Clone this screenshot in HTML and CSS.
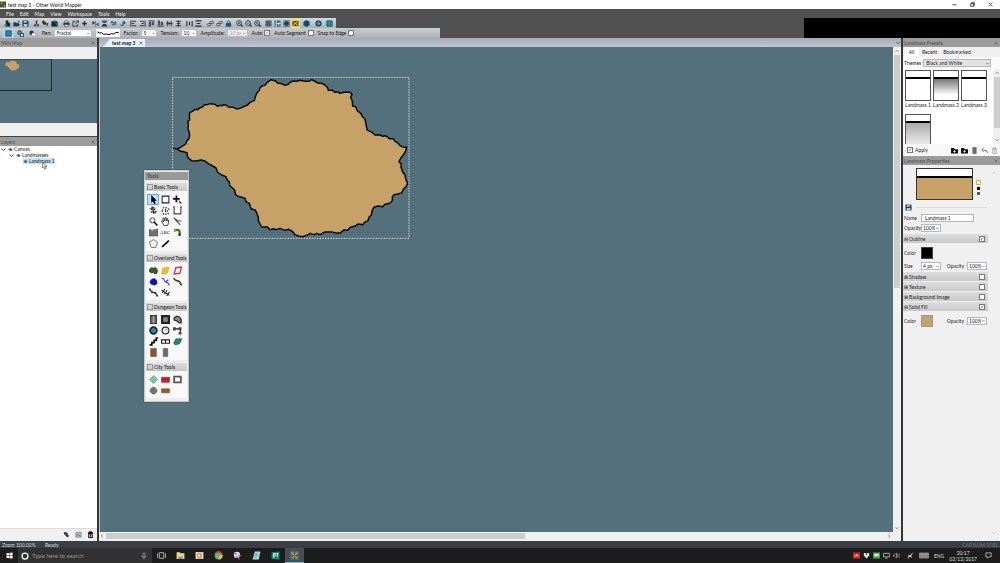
FILE: index.html
```html
<!DOCTYPE html>
<html lang="en">
<head>
<meta charset="utf-8">
<meta name="viewport" content="width=device-width, initial-scale=1">
<title>test map 3 - Other World Mapper</title>
<link rel="stylesheet" href="styles.css">
</head>
<body>
<svg class="sprite" aria-hidden="true">
  <symbol id="new" viewBox="0 0 16 16"><path d="M4 1h6v5h4v9H4z" fill="#17242e"/><path d="M1 12h8M5 8v8" stroke="#1d5f7e" stroke-width="2"/></symbol>
  <symbol id="open" viewBox="0 0 16 16"><path d="M1 14V5h5l1 2h6v2h3l-3 5z" fill="#17394c"/><path d="M9 3h4V1l3 3-3 3" fill="#1d6f97"/></symbol>
  <symbol id="save" viewBox="0 0 16 16"><path d="M1 1h12l2 2v12H1z" fill="#1c455c"/><path d="M4 2h7v4H4zM4 9h8v6H4z" fill="#b9cbd6"/></symbol>
  <symbol id="cut" viewBox="0 0 16 16"><path d="M6 1l3 8M10 1L7 9" stroke="#222" stroke-width="2"/><circle cx="5" cy="12" r="2" fill="none" stroke="#222" stroke-width="2"/><circle cx="11" cy="12" r="2" fill="none" stroke="#222" stroke-width="2"/></symbol>
  <symbol id="link" viewBox="0 0 16 16"><path d="M3 2l5 5-3 3-4-5zM8 7l5 6M9 11l5-4" fill="#333" stroke="#333" stroke-width="2.5"/></symbol>
  <symbol id="paste" viewBox="0 0 16 16"><path d="M1 3h14v12H1z" fill="#142631"/><path d="M5 1h6v4H5z" fill="#356a86"/><path d="M8 7h7v8" fill="#245f7f"/></symbol>
  <symbol id="print" viewBox="0 0 16 16"><path d="M1 6h14v6H1z" fill="#30363a"/><path d="M4 2h8v4H4zM4 10h8v5H4z" fill="#cdd5da" stroke="#30363a"/></symbol>
  <symbol id="export" viewBox="0 0 16 16"><path d="M8 3H2v11h11v-4M7 9l7-6M10 2h5v5" fill="none" stroke="#28333a" stroke-width="2"/></symbol>
  <symbol id="plus" viewBox="0 0 16 16"><path d="M8 3v10M3 8h10" stroke="#1c2a33" stroke-width="3"/></symbol>
  <symbol id="fliph" viewBox="0 0 16 16"><path d="M1 2l6 4-6 5z" fill="#222"/><path d="M15 5v9l-6-4z" fill="#14638b"/><path d="M8 1v14" stroke="#222"/></symbol>
  <symbol id="flipv" viewBox="0 0 16 16"><path d="M1 1h14l-4 6H5z" fill="#176289"/><path d="M5 9h6l4 6H1z" fill="#273740"/></symbol>
  <symbol id="undo" viewBox="0 0 16 16"><path d="M2 6h8v5H4M2 6l4-4M13 3v8" fill="none" stroke="#35627c" stroke-width="2.5"/></symbol>
  <symbol id="redo" viewBox="0 0 16 16"><path d="M2 12h7V6h4M10 2l4 4-4 4" fill="none" stroke="#246588" stroke-width="2.5"/></symbol>
  <symbol id="al" viewBox="0 0 16 16"><path d="M2 1v14M4 3h10M4 8h6M4 13h10" stroke="#252b2f" stroke-width="2" fill="none"/></symbol>
  <symbol id="ar" viewBox="0 0 16 16"><path d="M14 1v14M2 3h10M6 8h6M2 13h10" stroke="#252b2f" stroke-width="2" fill="none"/></symbol>
  <symbol id="at" viewBox="0 0 16 16"><path d="M1 2h14M3 4v10h3V4M10 4v7h3V4" stroke="#252b2f" stroke-width="2" fill="none"/></symbol>
  <symbol id="ab" viewBox="0 0 16 16"><path d="M1 14h14M3 12V2h3v10M10 12V5h3v7" stroke="#252b2f" stroke-width="2" fill="none"/></symbol>
  <symbol id="am" viewBox="0 0 16 16"><path d="M1 8h14M3 2v12M7 4v8M12 2v12" stroke="#252b2f" stroke-width="2" fill="none"/></symbol>
  <symbol id="ac" viewBox="0 0 16 16"><path d="M8 1v14M2 3h12M4 8h8M2 13h12" stroke="#252b2f" stroke-width="2" fill="none"/></symbol>
  <symbol id="dh" viewBox="0 0 16 16"><path d="M2 2v12M14 2v12M8 4v8" stroke="#252b2f" stroke-width="2.5" fill="none"/></symbol>
  <symbol id="dv" viewBox="0 0 16 16"><path d="M1 2h14M4 8h8M1 14h14" stroke="#252b2f" stroke-width="2.5" fill="none"/></symbol>
  <symbol id="chain" viewBox="0 0 16 16"><rect x="1" y="8" width="8" height="5" rx="2" fill="none" stroke="#444f56" stroke-width="2"/><rect x="7" y="3" width="8" height="5" rx="2" fill="none" stroke="#444f56" stroke-width="2"/></symbol>
  <symbol id="lock" viewBox="0 0 16 16"><path d="M2 7h12v8H2z" fill="#175273"/><path d="M5 7V4q3-5 6 0v3" fill="none" stroke="#175273" stroke-width="2"/></symbol>
  <symbol id="zoomi" viewBox="0 0 16 16"><circle cx="7" cy="7" r="5.5" fill="#c6d5dd" stroke="#1e2f3a" stroke-width="2"/><path d="M11 11l4 4" stroke="#1e2f3a" stroke-width="3"/><path d="M4 7h6M7 4v6" stroke="#175273" stroke-width="2"/></symbol>
  <symbol id="zoomo" viewBox="0 0 16 16"><circle cx="7" cy="7" r="5.5" fill="#c6d5dd" stroke="#1e2f3a" stroke-width="2"/><path d="M11 11l4 4" stroke="#1e2f3a" stroke-width="3"/><path d="M4 7h6" stroke="#175273" stroke-width="2"/></symbol>
  <symbol id="grid" viewBox="0 0 16 16"><path d="M1 1h14v14H1z" fill="#60727d"/><path d="M1 5h14M1 10h14M5 1v14M10 1v14" stroke="#35444d"/></symbol>
  <symbol id="snap" viewBox="0 0 16 16"><path d="M1 1h14v14H1z" fill="#3d6a82"/><path d="M5 1v14M11 5v7M5 8h10" stroke="#dbe6ec" stroke-width="2"/></symbol>
  <symbol id="fit" viewBox="0 0 16 16"><path d="M1 1h14v14H1z" fill="#345a6e"/><path d="M3 3l10 10M13 3L3 13" stroke="#c5d3da" stroke-width="2"/><path d="M5 5h6v6H5z" fill="#15222a"/></symbol>
  <symbol id="fitall" viewBox="0 0 16 16"><path d="M1 2h14v12H1z" fill="#4c4415"/><path d="M3 4l10 8M13 4L3 12" stroke="#fff3a6" stroke-width="2"/></symbol>
  <symbol id="hex" viewBox="0 0 16 16"><path d="M8 0l7 4v8l-7 4-7-4V4z" fill="#174b68"/></symbol>
  <symbol id="ring" viewBox="0 0 16 16"><circle cx="8" cy="8" r="5.5" fill="#5794b5" stroke="#173e55" stroke-width="3"/></symbol>
  <symbol id="square" viewBox="0 0 16 16"><path d="M2 2h12v12H2z" fill="#2f83a9" stroke="#13516f" stroke-width="2"/></symbol>
  <symbol id="union" viewBox="0 0 16 16"><circle cx="6" cy="6" r="4.5" fill="#4897c0" stroke="#12394f" stroke-width="2"/><path d="M8 8h7v7H8z" fill="#cfe4ee" stroke="#12394f" stroke-width="2"/></symbol>
  <symbol id="minus" viewBox="0 0 16 16"><circle cx="6" cy="6" r="5" fill="#12394f"/><path d="M7 7h7v7H7z" fill="#fff" stroke="#7b98a8"/></symbol>

  <symbol id="arrow" viewBox="0 0 16 16"><path d="M4 0v14l3-3 2 5 3-1-2-5h4z" fill="#000"/></symbol>
  <symbol id="rect" viewBox="0 0 16 16"><path d="M2 2h12v12H2z" fill="#fff" stroke="#222" stroke-width="1.8"/></symbol>
  <symbol id="move" viewBox="0 0 16 16"><path d="M6 1v12M0 7h12" stroke="#111" stroke-width="3"/><path d="M10 9l6 6h-4z" fill="#111"/></symbol>
  <symbol id="nodes" viewBox="0 0 16 16"><path d="M4 2h4l-3 4h5l-4 4h6l-5 4M2 5l9-2M3 10l9 3" fill="none" stroke="#222" stroke-width="2" stroke-dasharray="3 1"/></symbol>
  <symbol id="lasso" viewBox="0 0 16 16"><path d="M2 9l2-6h7l3 3-3 3 2 5-8 1z" fill="none" stroke="#333" stroke-width="2" stroke-dasharray="3 2"/><path d="M8 5v6" stroke="#333" stroke-width="2"/></symbol>
  <symbol id="cup" viewBox="0 0 16 16"><path d="M2 1v13h12V1" fill="#fff" stroke="#453f43" stroke-width="2"/><path d="M0 2h3M13 2h3" stroke="#b54b52" stroke-width="2"/></symbol>
  <symbol id="mag" viewBox="0 0 16 16"><circle cx="6" cy="6" r="4.5" fill="#fff" stroke="#333" stroke-width="1.6"/><path d="M9 9l6 6" stroke="#111" stroke-width="2.8"/></symbol>
  <symbol id="hand" viewBox="0 0 16 16"><path d="M4 9L2 6l-1 1 4 8h7l2-9-2 1V3h-2v4L9 1H7v6L5 2H3l2 7" fill="#fff" stroke="#222" stroke-width="1.4"/></symbol>
  <symbol id="knife" viewBox="0 0 16 16"><path d="M1 1l8 6h6M3 4l10 10" fill="none" stroke="#47503f" stroke-width="1.8"/></symbol>
  <symbol id="castle" viewBox="0 0 16 16"><path d="M0 3h4v3h3V3h3v3h2V2h4v12H0z" fill="#707070" stroke="#444"/></symbol>
  <symbol id="brush" viewBox="0 0 16 16"><path d="M4 4q8-2 8 4v6" fill="none" stroke="#237a2c" stroke-width="4"/><path d="M11 9v5" stroke="#173b1b" stroke-width="2"/><path d="M1 2l4-1 1 5-4 1z" fill="#c48339"/></symbol>
  <symbol id="penta" viewBox="0 0 16 16"><path d="M8 1l7 5-3 9H4L1 6z" fill="#f4f4f4" stroke="#555" stroke-width="1.4"/></symbol>
  <symbol id="line" viewBox="0 0 16 16"><path d="M2 14L14 3" stroke="#000" stroke-width="3"/></symbol>
  <symbol id="land" viewBox="0 0 16 16"><path d="M1 6l3-3 4 1 4-1 3 5-1 5-4 1-2-3-4 1-3-2z" fill="#39611f" stroke="#1c3311" stroke-width="1.5"/></symbol>
  <symbol id="region" viewBox="0 0 16 16"><path d="M3 4l11-2-2 9-3 3H1z" fill="#fdb927" stroke="#cc9722"/></symbol>
  <symbol id="border" viewBox="0 0 16 16"><path d="M5 3l10-1-3 11-10 1z" fill="#fff" stroke="#d33444" stroke-width="2.5"/></symbol>
  <symbol id="lake" viewBox="0 0 16 16"><path d="M1 8l4-5 5-1 4 4 1 6-5 3-7-2z" fill="#0a13b5"/></symbol>
  <symbol id="river" viewBox="0 0 16 16"><path d="M1 2q4 0 5 4t6 4l3 5M9 8l4-3" fill="none" stroke="#3f50c8" stroke-width="2"/></symbol>
  <symbol id="road" viewBox="0 0 16 16"><path d="M1 2q3 5 7 5t7 8" fill="none" stroke="#383a18" stroke-width="3"/><path d="M1 2q3 5 7 5t7 8" fill="none" stroke="#b59b51" stroke-dasharray="2 2"/></symbol>
  <symbol id="path" viewBox="0 0 16 16"><path d="M1 2l4 5 6 2 4 5" fill="none" stroke="#26353e" stroke-width="2.2"/><path d="M0 1h3v3H0zM4 6h3v3H4zM10 7h3v3h-3zM13 12h3v3h-3z" fill="#27343e"/></symbol>
  <symbol id="rail" viewBox="0 0 16 16"><path d="M1 4l14 9M2 9l5-7M6 11l5-7M10 14l5-7" stroke="#222" stroke-width="1.8"/></symbol>
  <symbol id="wall" viewBox="0 0 16 16"><path d="M3 1h10v14H3z" fill="#777" stroke="#292929" stroke-width="2"/><path d="M8 1v14" stroke="#aaa" stroke-width="2"/></symbol>
  <symbol id="room" viewBox="0 0 16 16"><path d="M2 2h12v12H2z" fill="#888" stroke="#222" stroke-width="4"/></symbol>
  <symbol id="cave" viewBox="0 0 16 16"><path d="M2 5l5-3 5 2 3 5-1 5-4-1-4-3-4-1z" fill="#8b8b8b" stroke="#282828" stroke-width="2.2"/></symbol>
  <symbol id="disc" viewBox="0 0 16 16"><circle cx="8" cy="8" r="6" fill="#2d82b8" stroke="#17242e" stroke-width="3"/></symbol>
  <symbol id="circ" viewBox="0 0 16 16"><circle cx="8" cy="8" r="6" fill="#eee" stroke="#292929" stroke-width="2"/><path d="M8 8l4-4" stroke="#aaa" stroke-width="2"/></symbol>
  <symbol id="corr" viewBox="0 0 16 16"><path d="M1 5h12v9" fill="none" stroke="#555" stroke-width="3"/><path d="M0 2h5v6H0zM10 2h5v5h-5zM10 11h5v4h-5z" fill="#444"/></symbol>
  <symbol id="stairs" viewBox="0 0 16 16"><path d="M1 14h4v-4h4V6h4V2h3" fill="none" stroke="#111" stroke-width="3"/></symbol>
  <symbol id="door" viewBox="0 0 16 16"><path d="M1 5h14v6H1zM8 5v6" fill="#fff" stroke="#222" stroke-width="2"/></symbol>
  <symbol id="floor" viewBox="0 0 16 16"><path d="M5 3h11l-4 9-8 2-3-3z" fill="#238476" stroke="#1c5951"/></symbol>
  <symbol id="wood" viewBox="0 0 16 16"><path d="M3 1h10v14H3z" fill="#8e572e" stroke="#69401f"/></symbol>
  <symbol id="stone" viewBox="0 0 16 16"><path d="M4 1h8v14H4z" fill="#666e78" stroke="#4b4c4f"/></symbol>
  <symbol id="diamond" viewBox="0 0 16 16"><path d="M8 1l7 7-7 7-7-7z" fill="#72cba0" stroke="#46866b"/></symbol>
  <symbol id="red" viewBox="0 0 16 16"><path d="M1 4h14v9H1z" fill="#c52631" stroke="#881b23"/><path d="M1 8h14" stroke="#881b23"/></symbol>
  <symbol id="block" viewBox="0 0 16 16"><path d="M2 3h12v10H2z" fill="#fff" stroke="#55525c" stroke-width="3"/></symbol>
  <symbol id="tower" viewBox="0 0 16 16"><path d="M6 2h4l4 4v4l-4 4H6l-4-4V6z" fill="#747474" stroke="#555"/></symbol>
  <symbol id="plank" viewBox="0 0 16 16"><path d="M1 5h14v7H1z" fill="#9b5a2c" stroke="#724426"/></symbol>

  <symbol id="trash" viewBox="0 0 16 16"><path d="M2 4h12M5 2h6M4 6v9h8V6z" fill="none" stroke="currentColor" stroke-width="2.4"/><path d="M8 7v6" stroke="currentColor" stroke-width="2"/></symbol>
  <symbol id="tag" viewBox="0 0 16 16"><path d="M2 2l7 1 5 9-4 3-8-8z" fill="#33444c"/></symbol>
  <symbol id="group" viewBox="0 0 16 16"><path d="M2 3h12v11H2z" fill="#bcc6cc" stroke="#66747c" stroke-width="1.6"/><path d="M4 10l3-3 4 5" stroke="#42505a" stroke-width="2" fill="none"/></symbol>
  <symbol id="folder" viewBox="0 0 16 16"><path d="M0 2h7l1 3h8v10H0z" fill="#111"/><path d="M8 7v6M5 10h6" stroke="#fff" stroke-width="1.6"/></symbol>
  <symbol id="back" viewBox="0 0 16 16"><path d="M15 13q-1-6-9-6M6 3L2 7l4 4" fill="none" stroke="#555" stroke-width="2"/></symbol>
  <symbol id="eye" viewBox="0 0 16 16"><path d="M0 8q8-10 16 0-8 10-16 0z" fill="#68a8c2"/><circle cx="8" cy="8" r="3.5" fill="#1b4e66"/></symbol>
  <symbol id="chev" viewBox="0 0 16 16"><path d="M2 5l6 6 6-6" fill="none" stroke="currentColor" stroke-width="2.5"/></symbol>
  <symbol id="x" viewBox="0 0 16 16"><path d="M2 2l12 12M14 2L2 14" stroke="currentColor" stroke-width="2"/></symbol>
  <symbol id="coast" viewBox="0 0 750 525"><path d="M25 235L38 237 50 230 62 222 65 214 72 205 74 195 72 186 69 175 70 162 68 155 74 150 73 138 74 128 82 124 90 118 98 119 105 113 112 112 118 104 127 104 135 101 150 103 158 109 165 106 172 107 175 104 183 105 190 111 205 112 213 116 222 116 232 112 240 108 248 105 255 97 268 92 271 80 275 70 283 61 285 53 293 47 300 46 306 38 318 29 330 32 338 39 350 41 360 46 370 43 377 36 385 33 395 34 405 31 420 34 432 34 440 29 448 33 460 40 470 40 480 45 488 53 490 61 502 61 510 67 518 65 525 70 540 66 555 67 561 73 557 82 562 94 563 108 572 110 577 122 588 131 592 140 600 147 603 163 607 181 618 185 630 195 645 194 652 199 662 197 673 206 685 206 690 214 698 218 705 227 714 231 725 232 722 243 715 255 707 265 702 275 709 283 708 292 713 306 720 315 722 327 728 340 723 350 715 358 710 369 698 372 687 374 682 380 682 392 674 400 660 403 653 410 640 408 628 411 622 420 619 435 612 442 609 452 598 457 594 464 580 462 569 469 556 472 548 481 536 480 527 488 515 490 500 486 480 486 465 494 456 490 446 494 436 490 425 496 412 500 400 498 390 494 382 484 372 478 360 481 345 475 335 479 325 476 315 479 307 471 290 471 284 460 280 452 280 441 275 428 270 420 258 416 253 400 243 395 240 385 230 382 217 378 211 372 209 360 200 352 194 347 193 336 187 330 183 320 170 315 158 307 153 294 143 288 130 281 120 273 108 270 94 273 80 272 68 262 66 248 55 245 43 242 38 237z"/></symbol>
</svg>

<div class="app">
  <header class="titlebar">
    <svg class="logo" viewBox="0 0 16 16"><path d="M0 0h16v16H0z" fill="#46502d"/><path d="M2 2h5v5H2zM9 9h5v5H9z" fill="#82914f"/></svg>
    <h1>test map 3 - Other World Mapper</h1>
    <div class="winbtns">
      <button aria-label="Minimize"><svg viewBox="0 0 16 16"><path d="M1 9h14" stroke="#222" stroke-width="2.5"/></svg></button>
      <button aria-label="Restore"><svg viewBox="0 0 16 16"><path d="M2 5h9v9H2zM5 5V2h9v9h-3" fill="none" stroke="#222" stroke-width="2.5"/></svg></button>
      <button aria-label="Close"><svg><use href="#x"/></svg></button>
    </div>
  </header>
  <nav class="menubar">
    <button>File</button><button>Edit</button><button>Map</button><button>View</button><button>Workspace</button><button>Tools</button><button>Help</button>
  </nav>
  <div class="toolbars">
    <div class="bars">
      <div class="bar main-bar">
        <div><button aria-label="New"><svg><use href="#new"/></svg></button><button aria-label="Open"><svg><use href="#open"/></svg></button><button aria-label="Save"><svg><use href="#save"/></svg></button></div>
        <div><button aria-label="Cut"><svg><use href="#cut"/></svg></button><button aria-label="Copy"><svg><use href="#link"/></svg></button><button aria-label="Paste"><svg><use href="#paste"/></svg></button></div>
        <div><button aria-label="Print"><svg><use href="#print"/></svg></button><button aria-label="Export"><svg><use href="#export"/></svg></button><button aria-label="Add"><svg><use href="#plus"/></svg></button></div>
        <div><button aria-label="Flip horizontally"><svg><use href="#fliph"/></svg></button><button aria-label="Flip vertically"><svg><use href="#flipv"/></svg></button><button aria-label="Rotate left"><svg><use href="#undo"/></svg></button><button aria-label="Rotate right"><svg><use href="#redo"/></svg></button></div>
        <div><button aria-label="Align left"><svg><use href="#al"/></svg></button><button aria-label="Align right"><svg><use href="#ar"/></svg></button><button aria-label="Align top"><svg><use href="#at"/></svg></button><button aria-label="Align bottom"><svg><use href="#ab"/></svg></button><button aria-label="Align middle"><svg><use href="#am"/></svg></button><button aria-label="Align center"><svg><use href="#ac"/></svg></button></div>
        <div><button aria-label="Distribute horizontally"><svg><use href="#dh"/></svg></button><button aria-label="Distribute vertically"><svg><use href="#dv"/></svg></button></div>
        <div><button aria-label="Link"><svg><use href="#chain"/></svg></button><button aria-label="Unlink"><svg><use href="#chain"/></svg></button><button aria-label="Lock"><svg><use href="#lock"/></svg></button></div>
        <div><button aria-label="Zoom in"><svg><use href="#zoomi"/></svg></button><button aria-label="Zoom out"><svg><use href="#zoomo"/></svg></button><button aria-label="Zoom reset"><svg><use href="#zoomi"/></svg></button></div>
        <div><button aria-label="Grid"><svg><use href="#grid"/></svg></button><button aria-label="Snap"><svg><use href="#snap"/></svg></button><button aria-label="Fit"><svg><use href="#fit"/></svg></button><button class="lit" aria-label="Show nodes"><svg><use href="#fitall"/></svg></button></div>
        <div><button aria-label="Hexes"><svg><use href="#hex"/></svg></button></div>
        <div><button aria-label="Ring"><svg><use href="#ring"/></svg></button></div>
        <div><button aria-label="Frame"><svg><use href="#square"/></svg></button></div>
      </div>
      <div class="bar opt-bar">
        <div class="modes"><button class="on" aria-label="New shape"><svg><use href="#square"/></svg></button><button aria-label="Add shape"><svg><use href="#union"/></svg></button><button aria-label="Subtract shape"><svg><use href="#minus"/></svg></button></div>
        <label class="pen">Pen: <select><option>Fractal</option></select></label>
        <svg class="curve" viewBox="0 0 72 24"><path d="M0 0h72v24H0z" fill="#fff"/><path d="M4 9l6 3 6-1 7 5 8-1 8 2 7-3 7 1 6-4 9-1" fill="none" stroke="#000" stroke-width="3"/></svg>
        <label>Factor: <select class="num"><option>5</option></select></label>
        <label>Tension: <select class="num"><option>10</option></select></label>
        <label>Amplitude: <select class="num wide" disabled><option>10 px</option></select></label>
        <label>Auto <input type="checkbox" checked></label>
        <label>Auto Segment <input type="checkbox"></label>
        <label>Snap to Edge <input type="checkbox"></label>
      </div>
    </div>
    <div class="blank"></div>
  </div>

  <main class="work">
    <aside class="left">
      <h2 class="head">Mini Map <button aria-label="Close Mini Map"><svg><use href="#x"/></svg></button></h2>
      <div class="mini"><svg viewBox="0 0 97 64" preserveAspectRatio="xMinYMin meet"><path d="M0 0h97v64H0z" fill="#54707c"/><use href="#coast" x="4" y="1" width="16" height="11" fill="#c6a268"/><path d="M0 0h51.500v31.500H0" fill="none" stroke="#1b2b33"/></svg></div>
      <h2 class="head">Layers <button aria-label="Close Layers"><svg><use href="#x"/></svg></button></h2>
      <div class="tree">
        <ul>
          <li><button><svg><use href="#chev"/></svg><svg><use href="#eye"/></svg>Canvas</button>
            <ul><li><button><svg><use href="#chev"/></svg><svg><use href="#eye"/></svg>Landmasses</button>
              <ul><li><button class="picked"><svg><use href="#eye"/></svg>Landmass 1</button></li></ul></li></ul></li>
        </ul>
        <svg class="pointer" viewBox="0 0 16 24"><path d="M2 1v17l4-4 3 8 4-2-3-7h6z" fill="#fff" stroke="#333" stroke-width="2"/></svg>
      </div>
      <div class="tree-tools"><button aria-label="Tag"><svg><use href="#tag"/></svg></button><button aria-label="Group"><svg><use href="#group"/></svg></button><button aria-label="Delete"><svg><use href="#trash"/></svg></button></div>
    </aside>

    <section class="center">
      <div class="tabs"><button class="tab">test map 3 <svg><use href="#x"/></svg></button><button class="more" aria-label="More tabs"><svg><use href="#chev"/></svg></button></div>
      <div class="view">
        <div class="canvas">
          <svg class="island" viewBox="0 0 750 525"><use href="#coast" width="750" height="525" fill="#c6a268" stroke="#0a0a08" stroke-width="4.500" stroke-linejoin="round"/><path d="M23 22h709v483H23z" fill="none" stroke="#dfe8ec" stroke-width="3" stroke-dasharray="4 4"/></svg>
          <div class="palette">
            <h2>Tools</h2>
            <section><h3>Basic Tools</h3><div class="icons">
              <button class="on" aria-label="Select"><svg><use href="#arrow"/></svg></button><button aria-label="Marquee"><svg><use href="#rect"/></svg></button><button aria-label="Move"><svg><use href="#move"/></svg></button>
              <button aria-label="Nodes"><svg><use href="#nodes"/></svg></button><button aria-label="Lasso"><svg><use href="#lasso"/></svg></button><button aria-label="Crop"><svg><use href="#cup"/></svg></button>
              <button aria-label="Zoom"><svg><use href="#mag"/></svg></button><button aria-label="Pan"><svg><use href="#hand"/></svg></button><button aria-label="Knife"><svg><use href="#knife"/></svg></button>
              <button aria-label="Symbols"><svg><use href="#castle"/></svg></button><button class="abc">ABC</button><button aria-label="Paint"><svg><use href="#brush"/></svg></button>
              <button aria-label="Shape"><svg><use href="#penta"/></svg></button><button aria-label="Line"><svg><use href="#line"/></svg></button>
            </div></section>
            <section><h3>Overland Tools</h3><div class="icons">
              <button aria-label="Landmass"><svg><use href="#land"/></svg></button><button aria-label="Region"><svg><use href="#region"/></svg></button><button aria-label="Border"><svg><use href="#border"/></svg></button>
              <button aria-label="Lake"><svg><use href="#lake"/></svg></button><button aria-label="River"><svg><use href="#river"/></svg></button><button aria-label="Road"><svg><use href="#road"/></svg></button>
              <button aria-label="Path"><svg><use href="#path"/></svg></button><button aria-label="Railway"><svg><use href="#rail"/></svg></button>
            </div></section>
            <section><h3>Dungeon Tools</h3><div class="icons">
              <button aria-label="Wall"><svg><use href="#wall"/></svg></button><button aria-label="Room"><svg><use href="#room"/></svg></button><button aria-label="Cave"><svg><use href="#cave"/></svg></button>
              <button aria-label="Round room"><svg><use href="#disc"/></svg></button><button aria-label="Circle"><svg><use href="#circ"/></svg></button><button aria-label="Corridor"><svg><use href="#corr"/></svg></button>
              <button aria-label="Stairs"><svg><use href="#stairs"/></svg></button><button aria-label="Door"><svg><use href="#door"/></svg></button><button aria-label="Floor"><svg><use href="#floor"/></svg></button>
              <button aria-label="Wood"><svg><use href="#wood"/></svg></button><button aria-label="Stone"><svg><use href="#stone"/></svg></button>
            </div></section>
            <section><h3>City Tools</h3><div class="icons">
              <button aria-label="Park"><svg><use href="#diamond"/></svg></button><button aria-label="Building"><svg><use href="#red"/></svg></button><button aria-label="City block"><svg><use href="#block"/></svg></button>
              <button aria-label="Tower"><svg><use href="#tower"/></svg></button><button aria-label="Plank"><svg><use href="#plank"/></svg></button>
            </div></section>
          </div>
        </div>
        <div class="vscroll"><svg class="up"><use href="#chev"/></svg><i></i><svg><use href="#chev"/></svg></div>
        <div class="hscroll"><svg class="lt"><use href="#chev"/></svg><i></i><svg class="rt"><use href="#chev"/></svg></div>
      </div>
    </section>

    <aside class="right">
      <h2 class="head">Landmass Presets <button aria-label="Close Landmass Presets"><svg><use href="#x"/></svg></button></h2>
      <div class="ptabs"><button class="on">All</button><button>Recent</button><button>Bookmarked</button></div>
      <label class="themes">Themes <select><option>Black and White</option></select></label>
      <div class="presets">
        <div class="thumbs">
          <button><span class="thumb"></span>Landmass 1</button><button><span class="thumb dark"></span>Landmass 2</button><button><span class="thumb"></span>Landmass 3</button>
          <button aria-label="Grey gradient"><span class="thumb grey"></span></button>
        </div>
        <div class="vscroll short"><svg class="up"><use href="#chev"/></svg><i></i><svg><use href="#chev"/></svg></div>
      </div>
      <div class="apply"><label><input type="checkbox" checked> Apply</label>
        <div><button aria-label="Add preset"><svg><use href="#folder"/></svg></button><button aria-label="Import preset"><svg><use href="#folder"/></svg></button><button aria-label="Bookmark"><svg><use href="#stone"/></svg></button><button aria-label="Revert"><svg><use href="#back"/></svg></button><button class="dim" aria-label="Delete preset"><svg><use href="#trash"/></svg></button></div>
      </div>
      <h2 class="head">Landmass Properties <button aria-label="Close Landmass Properties"><svg><use href="#x"/></svg></button></h2>
      <div class="propwrap">
        <form class="props">
          <div class="preview"><span class="sample"></span><span class="chips"><i></i><i></i><i></i></span></div>
          <div class="rule"><button type="button" aria-label="Save preset"><svg><use href="#save"/></svg></button><hr></div>
          <div class="row"><label for="nm">Name</label><input id="nm" type="text" value="Landmass 1"></div>
          <div class="row"><label for="op">Opacity</label><select id="op" class="pct"><option>100%</option></select></div>
          <label class="sec open"><span>Outline</span><input type="checkbox" checked></label>
          <div class="row tall"><label for="oc">Color</label><button id="oc" type="button" class="swatch"></button></div>
          <div class="row"><label for="sz">Size</label><select id="sz" class="pct"><option>4 px</option></select><label class="second">Opacity <select class="pct"><option>100%</option></select></label></div>
          <label class="sec"><span>Shadow</span><input type="checkbox"></label>
          <label class="sec"><span>Texture</span><input type="checkbox"></label>
          <label class="sec"><span>Background Image</span><input type="checkbox"></label>
          <label class="sec open"><span>Solid Fill</span><input type="checkbox" checked></label>
          <div class="row tall"><label for="fc">Color</label><button id="fc" type="button" class="swatch tan"></button><label class="second">Opacity <select class="pct"><option>100%</option></select></label></div>
        </form>
        <div class="gutter"><svg class="up"><use href="#chev"/></svg><svg><use href="#chev"/></svg></div>
      </div>
    </aside>
  </main>

  <footer class="status"><span class="zoom">Zoom 100.00%</span><span>Ready</span><span class="keys">CAP NUM SCRL</span></footer>

  <footer class="taskbar">
    <button class="start" aria-label="Start"><svg viewBox="0 0 16 16"><path d="M1 3l6-1v5.500H1zM8 2l7-1v6.500H8zM1 8.500h6V14l-6-1zM8 8.500h7V15l-7-1z" fill="#fff"/></svg></button>
    <div class="search"><svg viewBox="0 0 16 16"><circle cx="8" cy="8" r="6" fill="none" stroke="#fff" stroke-width="2.500"/></svg><input type="text" placeholder="Type here to search" aria-label="Search"><svg viewBox="0 0 16 16"><path d="M6 2h4v7H6zM4 7q0 5 4 5t4-5M8 12v3" fill="none" stroke="#999" stroke-width="1.400"/></svg></div>
    <div class="apps">
      <button aria-label="Task view"><svg viewBox="0 0 16 16"><path d="M4 3h8v10H4zM1 4v8M15 4v8" fill="none" stroke="#bbb" stroke-width="1.600"/></svg></button>
      <button aria-label="Explorer"><svg viewBox="0 0 16 16"><path d="M1 2h6l1 2h7v10H1z" fill="#f5d778"/><path d="M4 10h8v4H4z" fill="#4ba0d8"/></svg></button>
      <button aria-label="Media player"><svg viewBox="0 0 16 16"><path d="M1 2h14v12H1z" fill="#e9e2d6"/><circle cx="8" cy="8" r="4.500" fill="#e17d26"/><path d="M6 5l5 3-5 3z" fill="#fff"/></svg></button>
      <button aria-label="Chrome"><svg viewBox="0 0 16 16"><circle cx="8" cy="8" r="7" fill="#4caf50"/><path d="M2 4a7 7 0 0 1 12 0L15 6H8z" fill="#e34234"/><path d="M15 6a7 7 0 0 1-7 9l3-6z" fill="#fbc02d"/><circle cx="8" cy="8" r="3" fill="#3b82e0" stroke="#fff"/></svg></button>
      <button aria-label="Snipping tool"><svg viewBox="0 0 16 16"><circle cx="7" cy="7" r="5.500" fill="#dbe1ef"/><path d="M5 9l7 6M10 8l5 1" stroke="#b9414d" stroke-width="2"/><circle cx="5" cy="5" r="2" fill="#6b8dc5"/></svg></button>
      <button aria-label="Notepad"><svg viewBox="0 0 16 16"><path d="M5 1h10l-3 14H1z" fill="#a7d9e4"/><path d="M5 5h6M5 8h5M4 11h5" stroke="#4f90a1" stroke-width="1.400"/></svg></button>
      <button aria-label="Filmora"><svg viewBox="0 0 16 16"><path d="M1 2l14-1v14L1 14z" fill="#118a78"/><path d="M5 12V5h4M5 8h3M11 10V5h2" fill="none" stroke="#fff" stroke-width="1.800"/></svg></button>
      <button class="on" aria-label="Other World Mapper"><svg viewBox="0 0 16 16"><path d="M1 1h6v6H1z" fill="#8a8342"/><path d="M9 1h6v6H9z" fill="#4c8f94"/><path d="M1 9h6v6H1z" fill="#4e7f93"/><path d="M9 9h6v6H9z" fill="#8e7a3c"/><path d="M4 4l8 8M12 4l-8 8" stroke="#c9b069" stroke-width="1.500"/></svg></button>
    </div>
    <div class="tray">
      <svg viewBox="0 0 16 16"><path d="M0 1h16v14H0z" fill="#d9222a"/><path d="M4 11l4-6 4 6M4 8h8" stroke="#fff" fill="none" stroke-width="1.500"/></svg>
      <svg viewBox="0 0 16 16"><path d="M2 2h12v6l-6 7-6-7z" fill="#e4e4e4"/><path d="M6 3h4l-2 5z" fill="#222"/></svg>
      <svg viewBox="0 0 16 16"><path d="M0 1h16v14H0z" fill="#42a247"/><path d="M3 4h10v6H3z" fill="#d9f0d7"/></svg>
      <svg viewBox="0 0 16 16"><path d="M1 3h14v8H1zM5 14h6" fill="none" stroke="#ddd" stroke-width="1.600"/></svg>
      <svg viewBox="0 0 16 16"><path d="M1 6h3l4-4v12l-4-4H1zM10 5q3 3 0 6M13 3q4 5 0 10" fill="none" stroke="#bbb" stroke-width="1.400"/></svg>
      <svg class="gap" viewBox="0 0 16 16"><path d="M2 14L13 2M3 8l8 4M2 14q4-9 9-5" fill="none" stroke="#ddd" stroke-width="2"/></svg>
      <svg class="kb" viewBox="0 0 20 12"><path d="M1 1h18v10H1z" fill="#777" stroke="#ccc"/><path d="M3 4h14M3 7h14" stroke="#ddd" stroke-dasharray="2 1"/></svg>
      <span>ENG</span>
      <time>20:17<br>02/12/2017</time>
      <svg viewBox="0 0 16 16"><path d="M2 2h12v9H9l-3 3v-3H2z" fill="none" stroke="#ddd" stroke-width="1.600"/></svg>
    </div>
  </footer>
</div>
</body>
</html>
```

FILE: styles.css
```css
* { box-sizing: border-box; }
body { margin: 0; font: 5px/6px Lato, "Liberation Sans", sans-serif; color: #111; }
h1, h2, h3, ul, hr { margin: 0; padding: 0; font: inherit; }
ul { list-style: none; }
button, input, select { font: inherit; color: inherit; margin: 0; padding: 0; border: 0; background: none; border-radius: 0; min-width: 0; }
button { display: inline-flex; align-items: center; justify-content: center; }
svg { display: block; width: 8px; height: 8px; flex: none; }
.sprite { position: absolute; width: 0; height: 0; }

select {
  appearance: none; height: 8px; padding: 0 6px 0 2px; border: 1px solid #b5b9bd; line-height: 6px;
  background: #fff url("data:image/svg+xml,%3Csvg xmlns='http://www.w3.org/2000/svg' viewBox='0 0 8 8'%3E%3Cpath d='M2 3l2 2 2-2' fill='none' stroke='%23555'/%3E%3C/svg%3E") right center / 5px 5px no-repeat;
}
input[type="checkbox"] { appearance: none; width: 6px; height: 6px; background: #fff; border: 1px solid #777; flex: none; }
input[type="checkbox"]:checked { background-image: url("data:image/svg+xml,%3Csvg xmlns='http://www.w3.org/2000/svg' viewBox='0 0 8 8'%3E%3Cpath d='M1 4l2 2 4-5' fill='none' stroke='%23333'/%3E%3C/svg%3E"); }
label { display: flex; align-items: center; gap: 2px; white-space: nowrap; }

.app { display: flex; flex-direction: column; height: 100vh; overflow: hidden; background: #505050; }

.titlebar { display: flex; align-items: center; gap: 2px; height: 9px; background: #fff; flex: none; }
.logo { width: 6px; height: 7px; }
.winbtns { display: flex; gap: 10px; margin-left: auto; padding-right: 6px; }
.winbtns svg { width: 5px; height: 5px; }
.winbtns button { width: 8px; }

.menubar { display: flex; gap: 6px; height: 9px; padding-left: 6px; color: #f0f0f0; flex: none; }

.toolbars { display: flex; justify-content: space-between; flex: none; }
.blank { width: 196px; background: #000; }
.bar { display: flex; align-items: center; height: 10px; background: linear-gradient(#d2d8de, #a9b0b8); }
.main-bar { width: 336px; justify-content: space-between; padding: 0 2px 0 3px; }
.main-bar > div { display: flex; }
.main-bar button { width: 9px; height: 9px; }
.main-bar svg { width: 7px; height: 7px; }
.main-bar .lit { background: #f7dc6b; }
.opt-bar { width: 440px; gap: 4px; padding-left: 3px; background: linear-gradient(#c9ccce, #aeb3b7); }
.modes { display: flex; gap: 1px; }
.modes button { width: 11px; height: 9px; }
.modes svg { width: 7px; height: 7px; }
.modes .on { background: #a9d1e8; }
.pen select { width: 38px; }
.curve { width: 24px; height: 8px; }
.num { width: 16px; }
.num.wide { width: 21px; color: #999; }

.work { display: flex; flex: 1; min-height: 0; background: #32363b; }
.head { display: flex; align-items: center; justify-content: space-between; height: 9px; padding: 0 2px 0 1px; background: #9c9c9c; color: #4a4a4a; flex: none; }
.head svg { width: 4px; height: 4px; }

.left { display: flex; flex-direction: column; width: 97px; background: #f0f0f0; flex: none; }
.mini { padding: 12px 0 13px; border-bottom: 1px solid #444; }
.mini svg { width: 100%; height: 64px; }
.tree { position: relative; flex: 1; background: #fff; padding: 0 0 0 1px; }
.tree button { display: flex; gap: 1px; height: 6px; }
.tree svg { width: 5px; height: 5px; }
.tree li button svg:first-child:not(:last-child) { margin-right: 1px; }
.tree ul ul { padding-left: 8px; }
.tree ul ul ul { padding-left: 14px; }
.tree .picked { background: #c5e3f8; }
.tree .picked svg:first-child { margin-right: 0; }
.tree .pointer { position: absolute; left: 42px; top: 16px; width: 5px; height: 8px; }
.tree-tools { display: flex; justify-content: flex-end; align-items: center; gap: 5px; height: 13px; padding: 0 3px 2px 0; border-top: 1px solid #ddd; }
.tree-tools svg { width: 7px; height: 7px; }

.center { display: flex; flex-direction: column; flex: 1; min-width: 0; margin: 0 2px; }
.tabs { display: flex; justify-content: space-between; height: 9px; background: linear-gradient(#a5abb8, #bfc4ce); flex: none; }
.tab { gap: 4px; margin-top: 1px; padding: 0 2px 0 9px; font-weight: 700; background: #eaf1fc; clip-path: polygon(0 100%, 7px 0, 100% 0, 100% 100%); margin-left: 4px; }
.tab svg, .more svg { width: 4px; height: 4px; }
.more { width: 7px; }
.view { display: grid; grid-template: 1fr 9px / 1fr 8px; flex: 1; min-height: 0; }
.canvas { position: relative; overflow: hidden; background: #54707c; border-left: 1px solid #b6c5d2; }
.island { position: absolute; left: 65px; top: 23px; width: 250px; height: 175px; }
.vscroll { display: flex; flex-direction: column; align-items: center; justify-content: space-between; background: #f0f0f0; padding: 2px 0; }
.vscroll svg, .hscroll svg, .gutter svg { width: 4px; height: 4px; color: #555; }
.vscroll i { width: 6px; flex: 1; margin: 2px 0 238px; background: #cdcdcd; }
.up { transform: rotate(180deg); }
.lt { transform: rotate(90deg); }
.rt { transform: rotate(-90deg); }
.hscroll { grid-column: 1 / -1; display: flex; align-items: center; padding: 0 10px 1px 1px; background: #f0f0f0; }
.hscroll i { flex: 0 0 53%; height: 6px; margin: 0 auto 0 2px; background: #cdcdcd; }

.palette { position: absolute; left: 44px; top: 123px; width: 45px; padding: 1px 1px 0; background: #ededed; border: 1px solid #c4c8ca; box-shadow: 0 0 1px #333; }
.palette h2 { height: 8px; padding: 1px 2px; margin: 0 -1px; background: #999; color: #333; }
.palette section { margin: 3px 0; padding-bottom: 2px; background: #f8f8f8; }
.palette h3 { display: flex; align-items: center; gap: 1px; height: 8px; padding-left: 1px; background: linear-gradient(#ddd, #c6c6c6); white-space: nowrap; margin-bottom: 3px; }
.palette h3::before { content: ""; width: 4px; height: 4px; border: 1px solid #999; flex: none; }
.icons { display: grid; grid-template-columns: repeat(3, 12px); grid-auto-rows: 11px; justify-content: start; padding-left: 1px; }
.icons svg { width: 9px; height: 9px; }
.icons .on { background: #c4e2f6; outline: 1px solid #64a7d6; outline-offset: -1px; }
.abc { font-family: "Liberation Serif", serif; }

.right { display: flex; flex-direction: column; width: 97px; background: #f0f0f0; flex: none; color: #222; }
.ptabs { display: flex; height: 10px; padding-left: 1px; }
.ptabs button { padding: 0 3px; }
.ptabs .on { width: 15px; background: #fff; }
.themes { height: 12px; justify-content: space-between; padding: 0 9px 0 1px; background: #f9f9f9; }
.themes select { width: 69px; background-color: #e2e2e2; }
.presets { display: flex; height: 75px; background: #fff; }
.thumbs { display: grid; grid-template-columns: repeat(3, 26px); grid-auto-rows: 42px; gap: 2px; padding: 1px 0 0 2px; flex: 1; overflow: hidden; }
.thumbs button { flex-direction: column; justify-content: flex-start; gap: 1px; white-space: nowrap; }
.thumb { width: 26px; height: 31px; border: 1px solid #555; background: linear-gradient(#000, #000) 0 6px / 100% 2px no-repeat, #fff; flex: none; }
.thumb.dark { background: linear-gradient(#000, #000) 0 6px / 100% 2px no-repeat, linear-gradient(#fff 7px, #777 8px, #fff 24px); }
.thumb.grey { background: linear-gradient(#000, #000) 0 6px / 100% 2px no-repeat, linear-gradient(#fff 7px, #aaa 8px, #eee 30px); }
.vscroll.short { width: 7px; }
.vscroll.short i { margin: 2px 0 10px; }
.apply { display: flex; justify-content: space-between; align-items: center; height: 12px; padding: 0 2px 0 4px; background: #f8f8f8; }
.apply div { display: flex; gap: 3px; }
.apply svg { width: 7px; height: 7px; }
.dim { color: #bbb; }
.propwrap { display: flex; flex: 1; min-height: 0; }
.props { flex: 1; min-width: 0; }
.preview { display: flex; align-items: center; justify-content: flex-end; gap: 3px; height: 36px; padding: 2px 7px 0 0; }
.sample { width: 57px; height: 32px; border: 1px solid #333; background: linear-gradient(#fff 7px, #000 7px, #000 9px, #c6a268 9px); }
.chips { display: flex; flex-direction: column; align-items: center; gap: 2px; width: 5px; padding-top: 6px; }
.chips i { width: 3px; height: 3px; background: #555; }
.chips i:first-child { width: 5px; height: 5px; border: 1px solid #e2ad45; background: #fff; }
.chips i:nth-child(2) { background: #000; }
.rule { display: flex; align-items: center; gap: 4px; height: 12px; padding: 0 1px 0 2px; }
.rule svg { width: 7px; height: 7px; }
.rule hr { flex: 1; border: 0; border-top: 1px solid #ddd; }
.row { display: grid; grid-template-columns: 17px auto 1fr; align-items: center; height: 10px; padding: 0 1px; }
.row.tall { height: 17px; }
.row input { width: 53px; height: 8px; padding: 0 3px; background: #fff; border: 1px solid #b5b5b5; }
.pct { width: 20px; padding: 0 5px 0 1px; }
.second { justify-self: end; gap: 3px; }
.swatch { width: 12px; height: 12px; background: #000; border: 1px solid #444; }
.swatch.tan { background: #c6a268; border-color: #999; }
.sec { justify-content: space-between; height: 9px; margin: 1px 0; padding: 0 3px 0 1px; background: linear-gradient(#ddd, #c9c9c9); }
.sec span::before { content: "⊞"; margin-right: 1px; }
.sec.open span::before { content: "⊟"; }
.gutter { display: flex; flex-direction: column; justify-content: space-between; align-items: center; width: 12px; padding: 6px 0; }
.gutter svg { color: #bbb; }

.status { display: flex; align-items: center; height: 7px; padding: 0 2px; background: #3b3e44; color: #ddd; flex: none; }
.status .zoom { width: 43px; }
.keys { margin-left: auto; color: #777; }
.taskbar { display: flex; align-items: center; height: 15px; background: #1d1d1e; color: #ddd; flex: none; }
.start { width: 18px; height: 100%; }
.start svg { width: 7px; height: 7px; }
.search { display: flex; align-items: center; gap: 3px; width: 134px; height: 100%; padding: 0 4px 0 3px; background: #323233; }
.search input { flex: 1; font-size: 6px; line-height: 8px; color: #ddd; outline: 0; }
.search input::placeholder { color: #999; }
.apps { display: flex; height: 100%; }
.apps button { width: 19px; height: 100%; }
.apps svg { width: 9px; height: 9px; }
.apps .on { background: #494d51; border-bottom: 1px solid #76b9ed; }
.tray { display: flex; align-items: center; gap: 3px; margin-left: auto; padding-right: 8px; }
.tray svg { width: 7px; height: 7px; }
.tray .gap { margin-left: 4px; }
.tray .kb { width: 10px; margin: 0 2px; }
.tray time { text-align: center; margin: 0 5px 0 2px; }
```
